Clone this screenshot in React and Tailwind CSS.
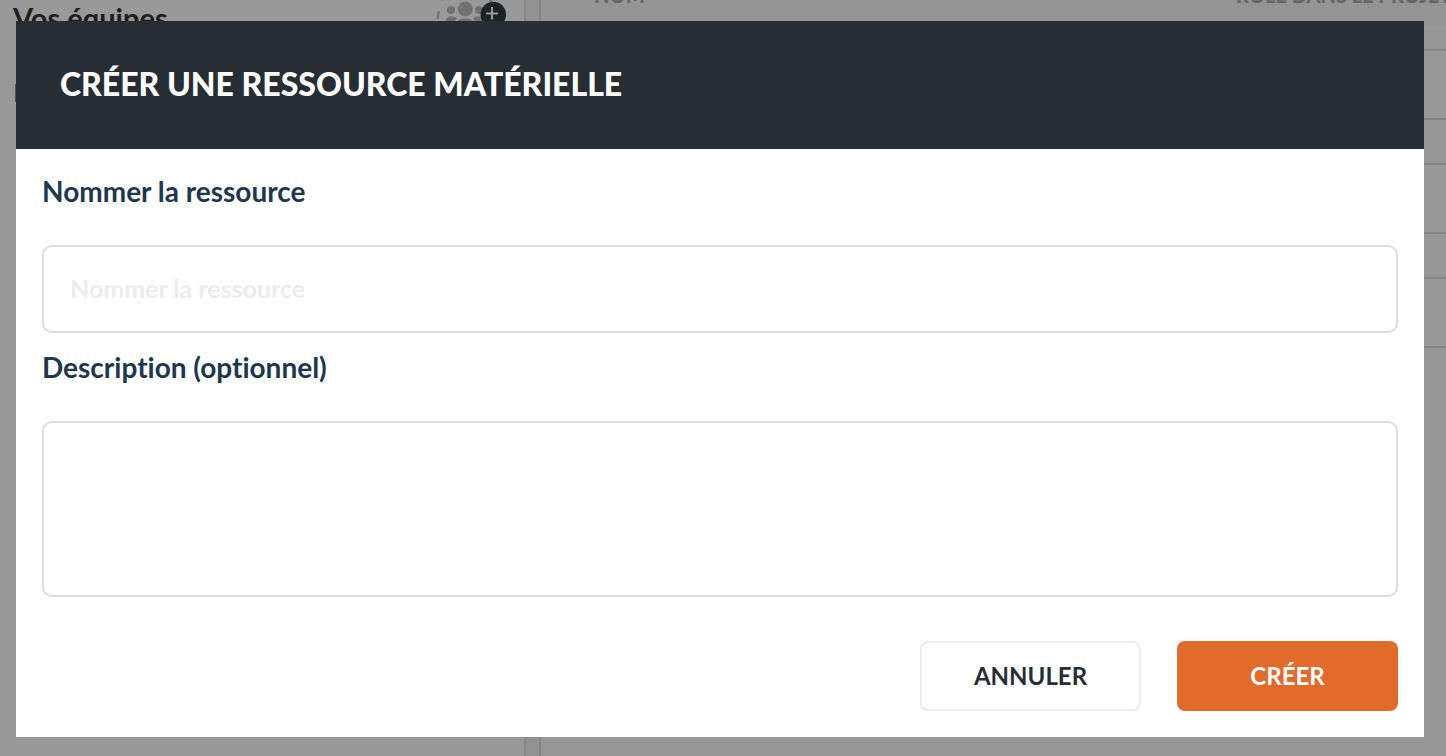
function TeamIcon() {
  return (
    <svg className="h-10 w-20" viewBox="0 0 80 40" fill="none" aria-hidden="true">
      <path d="M7.500 27l1.500-8M11 8.500l2-2.500M57 5l5 5" stroke="#bcbcbc" strokeWidth="2" />
      <g fill="#bcbcbc">
        <circle cx="21" cy="18" r="4" />
        <circle cx="49" cy="18" r="4" />
        <circle cx="35.300" cy="17" r="7.500" />
        <path d="M15 31c0-4 3-6.500 6-6.500 3 0 5 .5 6 2l-4 5-1 3h-7z" />
        <path d="M55 31c0-4-3-6.500-6-6.500-3 0-5 .5-6 2l4 5 1 3h7z" />
        <path d="M23 38c0-7 5-11.500 12-11.500s12 4.500 12 11.500z" />
      </g>
      <circle cx="63.300" cy="22.500" r="12.700" fill="#2f393e" />
      <path d="M62 15v12.500M56 21.500h12" stroke="#fff" strokeWidth="2" />
    </svg>
  );
}

function Row() {
  return <div className="h-[71px] shrink-0 border-y-2 border-[#dadada] bg-white" />;
}

function Background() {
  return (
    <div className="flex h-screen overflow-hidden bg-white" aria-hidden="true">
      <aside className="w-[524px] shrink-0 overflow-hidden">
        <div className="-mt-2 flex h-14 items-start justify-between pr-[14px] pl-[13px]">
          <h2 className="mt-1.5 text-[29px] leading-[40px] font-bold text-[#333]">Vos équipes</h2>
          <TeamIcon />
        </div>
        <div className="mt-9 ml-[15px] h-[18px] w-px bg-[#888]" />
      </aside>
      <div className="w-[17px] shrink-0 border-x-2 border-[#dedede] bg-[#f4f4f4]" />
      <main className="flex min-w-0 flex-1 flex-col overflow-hidden bg-[#fafafa]">
        <div className="-mt-4 flex h-[42px] shrink-0 overflow-hidden bg-[#f7f7f7] pl-[53px] text-[20px] leading-[22px] font-black whitespace-nowrap text-[#aaa]">
          <span className="w-[642px] shrink-0">NOM</span>
          <span>ROLE DANS LE PROJET</span>
        </div>
        <div className="flex flex-col gap-[43px] pt-[23px]">
          <Row />
          <Row />
          <Row />
        </div>
      </main>
    </div>
  );
}

export default function App() {
  return (
    <div className="relative h-screen overflow-hidden font-['Lato',sans-serif] [font-variant-ligatures:none]">
      <Background />
      <div className="absolute inset-0 overflow-auto bg-black/40 pt-[21px] pr-[22px] pl-4">
        <section role="dialog" aria-modal="true" aria-labelledby="dialog-title" className="bg-white">
          <header className="bg-[#262e34] px-11 pt-[39px] pb-[41px]">
            <h1 id="dialog-title" className="text-[32px] leading-[48px] font-black text-white">
              CRÉER UNE RESSOURCE MATÉRIELLE
            </h1>
          </header>
          <form className="px-[26px] pt-[22px] pb-[26px]" onSubmit={(e) => e.preventDefault()}>
            <label htmlFor="name" className="block text-[28px] leading-[40px] font-bold text-[#1c384e]">
              Nommer la ressource
            </label>
            <input
              id="name"
              type="text"
              placeholder="Nommer la ressource"
              className="mt-[34px] block h-[88px] w-full rounded-[10px] border-2 border-[#dcdcdc] px-[26px] pb-0.5 text-[25px] font-bold text-[#1c384e] outline-none placeholder:text-[#ececec]"
            />
            <label htmlFor="description" className="mt-[14px] block text-[28px] leading-[40px] font-bold text-[#1c384e]">
              Description (optionnel)
            </label>
            <textarea
              id="description"
              className="mt-[34px] block h-44 w-full resize-none rounded-[10px] border-2 border-[#dcdcdc] px-[26px] py-6 text-[25px] font-bold text-[#1c384e] outline-none"
            />
            <div className="mt-11 flex justify-end gap-9">
              <button type="button" className="h-[70px] w-[221px] rounded-lg border-2 border-[#ececec] bg-white text-[24px] font-bold text-[#262e34]">
                ANNULER
              </button>
              <button type="submit" className="h-[70px] w-[221px] rounded-lg bg-[#e16b2b] text-[24px] font-bold text-white">
                CRÉER
              </button>
            </div>
          </form>
        </section>
      </div>
    </div>
  );
}
